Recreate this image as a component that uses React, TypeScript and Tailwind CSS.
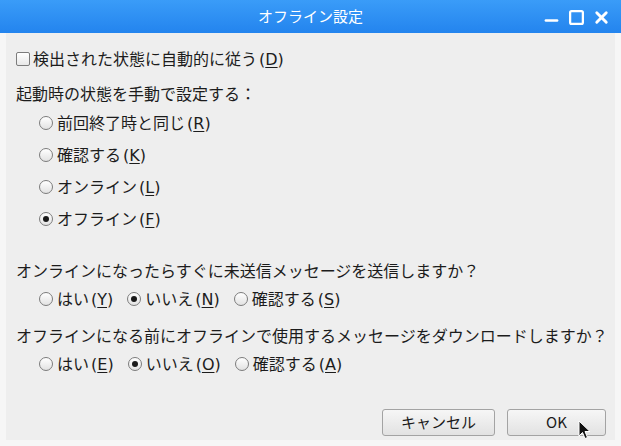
import { Minus, Square, X } from "lucide-react";

const font = { fontFamily: '"Noto Sans CJK JP", "Noto Sans", sans-serif' };

const Key = ({ k }: { k: string }) => (
  <span className="ml-[2px]" style={{ fontFamily: '"DejaVu Sans", sans-serif' }}>
    (<span className="underline underline-offset-2">{k}</span>)
  </span>
);

const Radio = ({ checked }: { checked?: boolean }) => (
  <span className="box-border w-[14px] h-[14px] rounded-full border border-[#7c7c7c] bg-gradient-to-b from-[#ffffff] to-[#e2e2e2] inline-flex items-center justify-center shrink-0 mr-[4px]">
    {checked && <span className="w-[6px] h-[6px] rounded-full bg-[#1a1a1a]" />}
  </span>
);

const RadioItem = ({ label, k, checked }: { label: string; k: string; checked?: boolean }) => (
  <div className="flex items-center whitespace-nowrap">
    <Radio checked={checked} />
    <span>
      {label}
      <Key k={k} />
    </span>
  </div>
);

const Btn = ({ children, w }: { children: React.ReactNode; w: string }) => (
  <div
    className={`${w} h-[27px] rounded-[3px] border border-[#a3a3a3] bg-gradient-to-b from-[#f6f6f6] to-[#e2e2e2] flex items-center justify-center text-[15px] text-[#1a1a1a]`}
  >
    {children}
  </div>
);

export default function App() {
  return (
    <div className="w-[621px] h-[446px] bg-[#f6f6f6] flex flex-col overflow-hidden relative" style={font}>
      {/* title bar */}
      <div className="h-[33px] shrink-0 bg-gradient-to-b from-[#3a9cf8] to-[#2384ee] flex items-center relative">
        <div className="flex-1 text-center text-white text-[15px]">オフライン設定</div>
        <div className="absolute right-[10px] top-[8px] flex items-center gap-[7px] text-white">
          <Minus size={19} strokeWidth={3.4} className="translate-y-[3px]" />
          <Square size={17} strokeWidth={3.2} />
          <X size={19} strokeWidth={3.6} />
        </div>
      </div>

      {/* body */}
      <div className="flex-1 px-[6px] pb-[6px] flex flex-col">
        <div className="flex-1 bg-[#eeeeee] flex flex-col pl-[10px] pr-[9px] pb-[4px] text-[16px] text-[#1c1c1c] whitespace-nowrap">
          <div className="h-[20px] mt-[16px] flex items-center">
            <span className="box-border w-[14px] h-[14px] shrink-0 rounded-[2px] border border-[#7c7c7c] bg-gradient-to-b from-[#ffffff] to-[#e8e8e8] mr-[3px]" />
            <span>
              検出された状態に自動的に従う
              <Key k="D" />
            </span>
          </div>
          <div className="h-[20px] mt-[14px] flex items-center">起動時の状態を手動で設定する：</div>
          <div className="mt-[4px] pl-[23px] flex flex-col">
            <div className="h-[32px] flex items-center">
              <RadioItem label="前回終了時と同じ" k="R" />
            </div>
            <div className="h-[32px] flex items-center">
              <RadioItem label="確認する" k="K" />
            </div>
            <div className="h-[32px] flex items-center">
              <RadioItem label="オンライン" k="L" />
            </div>
            <div className="h-[32px] flex items-center">
              <RadioItem label="オフライン" k="F" checked />
            </div>
          </div>
          <div className="h-[20px] mt-[25px] flex items-center">
            オンラインになったらすぐに未送信メッセージを送信しますか？
          </div>
          <div className="h-[20px] mt-[9px] pl-[23px] flex items-center gap-[14px]">
            <RadioItem label="はい" k="Y" />
            <RadioItem label="いいえ" k="N" checked />
            <RadioItem label="確認する" k="S" />
          </div>
          <div className="h-[20px] mt-[16px] flex items-center">
            オフラインになる前にオフラインで使用するメッセージをダウンロードしますか？
          </div>
          <div className="h-[20px] mt-[9px] pl-[23px] flex items-center gap-[14px]">
            <RadioItem label="はい" k="E" />
            <RadioItem label="いいえ" k="O" checked />
            <RadioItem label="確認する" k="A" />
          </div>
          <div className="mt-auto flex justify-end gap-[12px]">
            <Btn w="w-[113px]">キャンセル</Btn>
            <Btn w="w-[99px]">OK</Btn>
          </div>
        </div>
      </div>

      {/* mouse pointer */}
      <svg className="absolute left-[578px] top-[420px]" width="13" height="20" viewBox="0 0 13 20">
        <path d="M1 1 L1 16 L4.5 12.5 L7 18.5 L9.5 17.5 L7 11.5 L12 11.5 Z" fill="#111" stroke="#fff" strokeWidth="1" />
      </svg>
    </div>
  );
}
